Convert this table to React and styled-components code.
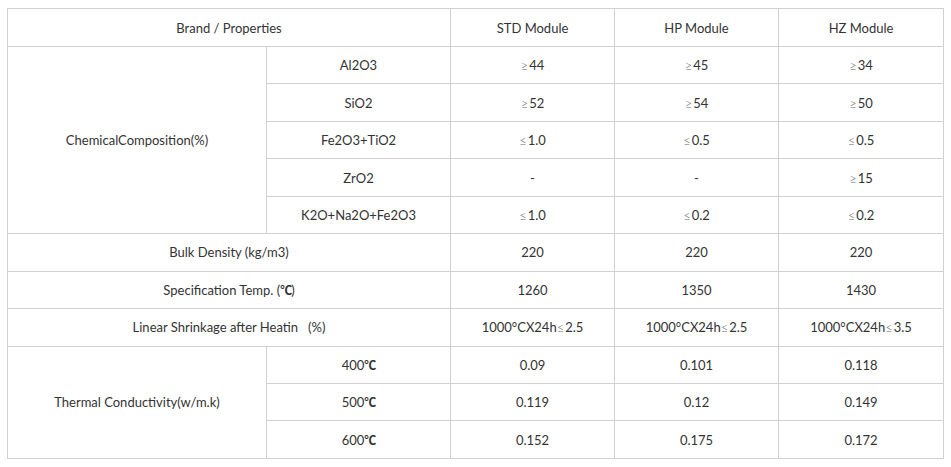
import styled, { createGlobalStyle } from "styled-components";

const GlobalStyle = createGlobalStyle`
  body {
    margin: 0;
    background: #fff;
    font-family: Lato, "Open Sans", "DejaVu Sans", sans-serif;
    color: #333;
  }
`;

const Wrapper = styled.div`
  padding: 8px 8px 0 7px;
`;

const Table = styled.table`
  width: 936px;
  border-collapse: collapse;
  table-layout: fixed;
  font-size: 13px;
  color: #333;
`;

const Row = styled.tr`
  height: ${(p) => (p.$head ? "38px" : "37.45px")};
`;

const Cell = styled.td`
  border: 1px solid #d0d0d0;
  text-align: center;
  vertical-align: middle;
  padding: 0;
  line-height: 18px;
`;

const Celsius = styled.span`
  font-family: "Noto Sans CJK SC", "DejaVu Sans", sans-serif;
  font-weight: 700;
  font-size: 12px;
  letter-spacing: -1px;
`;

const Cmp = styled.span`
  font-size: 13px;
  font-weight: 300;
  color: #666;
  margin-right: 1px;
`;

// split a label so the odd glyphs get their own font
function Txt({ s }) {
  const parts = s.split(/(℃|≥|≤)/);
  return parts.map((p, i) => {
    if (p === "℃") return <Celsius key={i}>℃</Celsius>;
    if (p === "≥" || p === "≤") return <Cmp key={i}>{p}</Cmp>;
    return p;
  });
}

const cols = [259, 184, 164, 164, 165];

const chem = [
  ["Al2O3", "≥44", "≥45", "≥34"],
  ["SiO2", "≥52", "≥54", "≥50"],
  ["Fe2O3+TiO2", "≤1.0", "≤0.5", "≤0.5"],
  ["ZrO2", "-", "-", "≥15"],
  ["K2O+Na2O+Fe2O3", "≤1.0", "≤0.2", "≤0.2"],
];

const single = [
  ["Bulk Density (kg/m3)", "220", "220", "220"],
  ["Specification Temp. (℃)", "1260", "1350", "1430"],
  ["Linear Shrinkage after Heatin\u00a0\u00a0\u00a0(%)", "1000°CX24h≤2.5", "1000°CX24h≤2.5", "1000°CX24h≤3.5"],
];

const thermal = [
  ["400℃", "0.09", "0.101", "0.118"],
  ["500℃", "0.119", "0.12", "0.149"],
  ["600℃", "0.152", "0.175", "0.172"],
];

export default function App() {
  return (
    <Wrapper>
      <GlobalStyle />
      <Table>
        <colgroup>
          {cols.map((w, i) => (
            <col key={i} style={{ width: w }} />
          ))}
        </colgroup>
        <tbody>
          <Row $head>
            <Cell colSpan={2}>Brand / Properties</Cell>
            <Cell>STD Module</Cell>
            <Cell>HP Module</Cell>
            <Cell>HZ Module</Cell>
          </Row>
          {chem.map((r, i) => (
            <Row key={r[0]}>
              {i === 0 && <Cell rowSpan={chem.length}>ChemicalComposition(%)</Cell>}
              {r.map((v, j) => (
                <Cell key={j}>
                  <Txt s={v} />
                </Cell>
              ))}
            </Row>
          ))}
          {single.map((r) => (
            <Row key={r[0]}>
              <Cell colSpan={2}>
                <Txt s={r[0]} />
              </Cell>
              {r.slice(1).map((v, j) => (
                <Cell key={j}>
                  <Txt s={v} />
                </Cell>
              ))}
            </Row>
          ))}
          {thermal.map((r, i) => (
            <Row key={r[0]}>
              {i === 0 && <Cell rowSpan={thermal.length}>Thermal Conductivity(w/m.k)</Cell>}
              {r.map((v, j) => (
                <Cell key={j}>
                  <Txt s={v} />
                </Cell>
              ))}
            </Row>
          ))}
        </tbody>
      </Table>
    </Wrapper>
  );
}
